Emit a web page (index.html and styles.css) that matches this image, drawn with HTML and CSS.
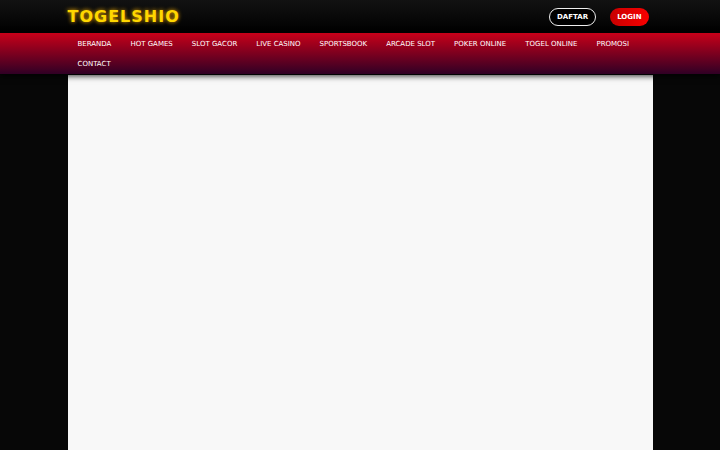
FILE: index.html
```html
<!DOCTYPE html>
<html lang="id">
<head>
	<meta charset="UTF-8">
	<meta name="viewport" content="width=device-width, initial-scale=1.0">
	<title>TOGELSHIO</title>
	<link rel="stylesheet" href="styles.css">
</head>
<body>

	<header class="header">
		<div class="container header__inner">
			<a class="logo" href="#">TOGELSHIO</a>
			<div class="header__buttons">
				<button class="btn btn--daftar" type="button">DAFTAR</button>
				<button class="btn btn--login" type="button">LOGIN</button>
			</div>
		</div>
	</header>

	<nav class="nav">
		<ul class="container nav__list">
			<li><a href="#">BERANDA</a></li>
			<li><a href="#">HOT GAMES</a></li>
			<li><a href="#">SLOT GACOR</a></li>
			<li><a href="#">LIVE CASINO</a></li>
			<li><a href="#">SPORTSBOOK</a></li>
			<li><a href="#">ARCADE SLOT</a></li>
			<li><a href="#">POKER ONLINE</a></li>
			<li><a href="#">TOGEL ONLINE</a></li>
			<li><a href="#">PROMOSI</a></li>
			<li><a href="#">CONTACT</a></li>
		</ul>
	</nav>

	<main class="container content"></main>

</body>
</html>
```

FILE: styles.css
```css
* {
    margin: 0;
    padding: 0;
    box-sizing: border-box;
}

body {
    display: flex;
    flex-direction: column;
    min-height: 100vh;
    background: #070707;
    color: #fff;
    font-family: "DejaVu Sans", Verdana, sans-serif;
    font-size: 7px;
}

a {
    color: inherit;
    text-decoration: none;
}

.container {
    width: 100%;
    max-width: 585px;
    margin: 0 auto;
}

/* top bar */
.header {
    background: linear-gradient(#121212, #000);
}

.header__inner {
    display: flex;
    justify-content: space-between;
    align-items: center;
    height: 33px;
}

.logo {
    color: #ffd700;
    font-size: 16px;
    font-weight: bold;
    letter-spacing: 1px;
    text-shadow: 0 0 4px #ffb400;
}

.header__buttons {
    display: flex;
    gap: 14px;
    padding-right: 4px;
}

.btn {
    height: 18px;
    padding: 0 7px;
    border: none;
    border-radius: 9px;
    color: #fff;
    font-family: inherit;
    font-size: 7px;
    font-weight: bold;
    cursor: pointer;
}

.btn--daftar {
    border: 1px solid #eee;
    background: #000;
}

.btn--login {
    background: linear-gradient(to right, #c80000, #f80000);
}

/* menu */
.nav {
    position: relative;
    padding-top: 1px;
    background: linear-gradient(#c80019, #300025);
    box-shadow: 0 2px 6px rgba(0, 0, 0, 0.8);
}

.nav__list {
    display: flex;
    flex-wrap: wrap;
    column-gap: 19px;
    padding: 0 10px;
    list-style: none;
    line-height: 20px;
}

.nav__list a:hover {
    color: #ffd700;
}

.content {
    flex: 1;
    margin-top: 1px;
    background: #f8f8f8;
}
```
